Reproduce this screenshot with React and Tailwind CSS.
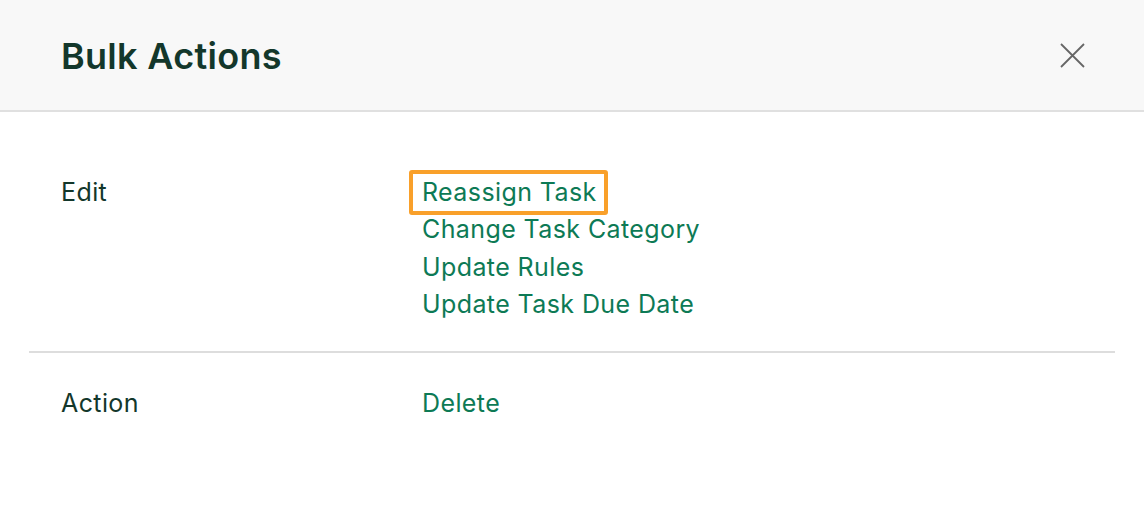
const EDIT_LINKS = ['Reassign Task', 'Change Task Category', 'Update Rules', 'Update Task Due Date'];

function Row({ label, children }) {
  return (
    <div className="flex">
      <div className="w-[393px] shrink-0 pl-[32px] text-[#13372b]">{label}</div>
      <div className="flex flex-col">{children}</div>
    </div>
  );
}

export default function App() {
  return (
    <div className="w-[1144px] h-[510px] bg-white font-['Inter',sans-serif] text-[25px] tracking-[0.4px] leading-[37.5px]">
      <div className="h-[112px] bg-[#f8f8f8] border-b-2 border-[#e0e0e0] flex items-center justify-between pl-[61px] pr-[59px]">
        <h1 className="text-[36px] font-semibold text-[#13372b] tracking-[0.3px] pt-[3px]">Bulk Actions</h1>
        <svg width="25" height="25" viewBox="0 0 25 25" className="text-[#666]">
          <path d="M1 1L24 24M24 1L1 24" stroke="currentColor" strokeWidth="1.8" fill="none" />
        </svg>
      </div>

      <div className="mx-[29px] pt-[62px] pb-[27px] border-b-2 border-[#dddddd] w-[1086px]">
        <Row label="Edit">
          {EDIT_LINKS.map((name, i) => (
            <a
              key={name}
              className={
                i === 0
                  ? 'text-[#0d7a55] -ml-[13px] pl-[9px] pr-[7px] border-4 border-[#f9a02a] rounded-[3px] self-start leading-[37px] -my-[4px]'
                  : 'text-[#0d7a55]'
              }
            >
              {name}
            </a>
          ))}
        </Row>
      </div>

      <div className="mx-[29px] pt-[32px]">
        <Row label="Action">
          <a className="text-[#0d7a55]">Delete</a>
        </Row>
      </div>
    </div>
  );
}
